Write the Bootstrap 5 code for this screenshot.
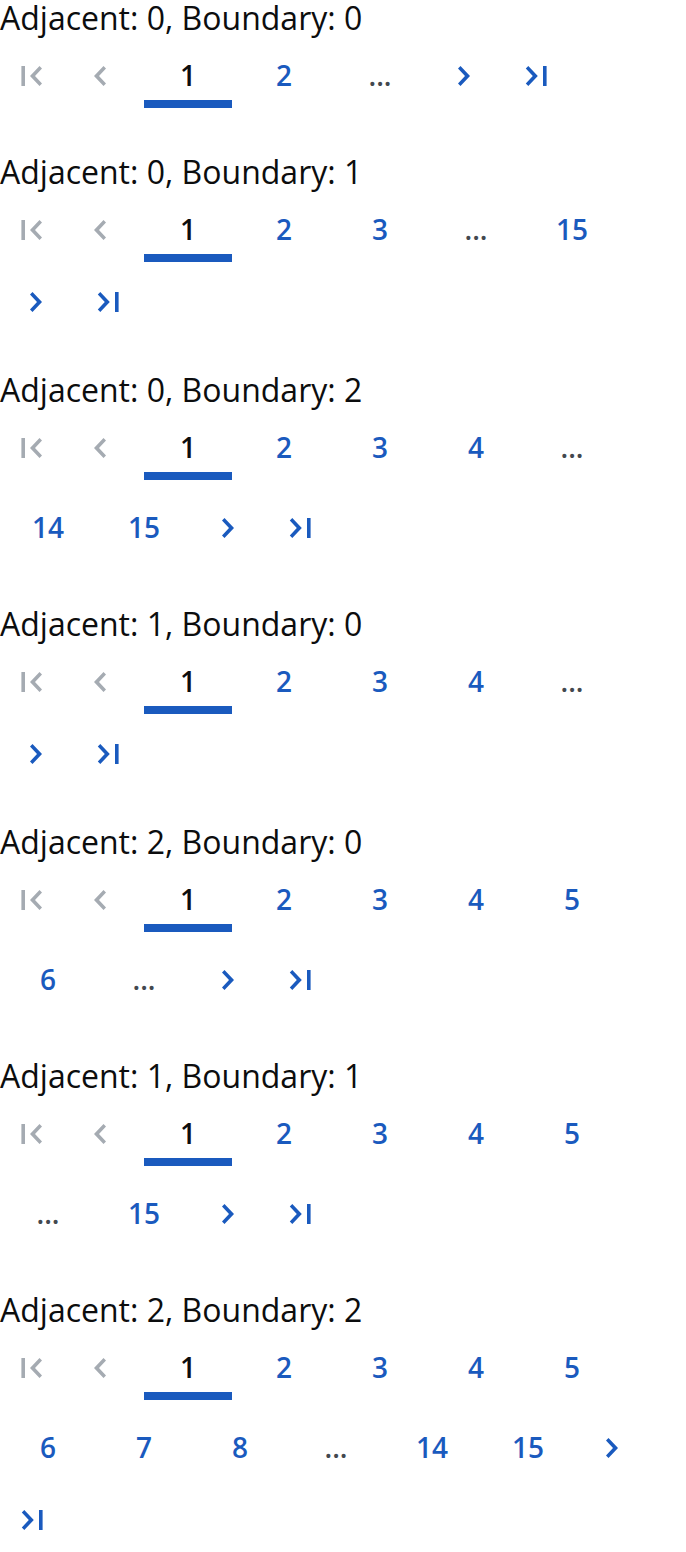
<!DOCTYPE html>
<html lang="en">
<head>
<meta charset="utf-8">
<meta name="viewport" content="width=device-width, initial-scale=1">
<title>Pagination: adjacent and boundary pages</title>
<link href="https://cdn.jsdelivr.net/npm/bootstrap@5.3.0/dist/css/bootstrap.min.css" rel="stylesheet">
<style>
  :root { --accent: #1a5abe; --ink: #0c0d0e; --muted: #a5abb2; --dots: #43484f; }
  body { font-family: "Open Sans", "Noto Sans", sans-serif; color: var(--ink); background: #fff; }
  .demo-list { gap: 38px; }
  .demo-title { font-size: 32px; line-height: 36px; font-weight: 400; color: var(--ink); }
  .pager-arrow, .pager-page {
    height: 64px; padding: 0; border: 0; border-radius: 0;
    display: flex; align-items: center; justify-content: center;
    color: var(--accent);
  }
  .pager-arrow { width: 64px; }
  .pager-arrow svg { width: 24px; height: 24px; fill: currentColor; }
  .pager-arrow:disabled { color: var(--muted); opacity: 1; border: 0; }
  .pager-step { margin-left: 4px; margin-right: 8px; }
  .pager-page { width: 88px; margin: 8px 4px; padding-bottom: 2px; font-size: 28px; line-height: 36px; font-weight: 600; }
  .pager-page[aria-current] { color: var(--ink); box-shadow: inset 0 -8px var(--accent); }
  .pager-dots { color: var(--dots); }
</style>
</head>
<body>
<svg class="d-none" aria-hidden="true">
  <symbol id="i-first" viewBox="0 0 24 24"><path d="M1.4 2H5v20H1.4zM22 4.5 19.5 2 10 12l9.5 10L22 19.5 15 12z"/></symbol>
  <symbol id="i-prev" viewBox="0 0 24 24"><path d="M18 4.5 15.5 2 6 12l9.5 10 2.5-2.5L11 12z"/></symbol>
  <symbol id="i-next" viewBox="0 0 24 24"><path d="M6 4.5 8.5 2 18 12 8.5 22 6 19.5 13 12z"/></symbol>
  <symbol id="i-last" viewBox="0 0 24 24"><path d="M1.8 4.5 4.3 2 13.8 12 4.3 22 1.8 19.5 8.8 12zM19 2h3.6v20H19z"/></symbol>
</svg>
<main class="demo-list d-flex flex-column">

  <section>
    <h2 class="demo-title m-0">Adjacent: 0, Boundary: 0</h2>
    <nav class="d-flex flex-wrap align-items-center" aria-label="Adjacent 0, boundary 0">
      <button class="btn pager-arrow" aria-label="First page" disabled><svg><use href="#i-first"/></svg></button>
      <button class="btn pager-arrow pager-step" aria-label="Previous page" disabled><svg><use href="#i-prev"/></svg></button>
      <button class="btn pager-page" aria-current="page">1</button>
      <button class="btn pager-page">2</button>
      <span class="pager-page pager-dots">...</span>
      <button class="btn pager-arrow pager-step" aria-label="Next page"><svg><use href="#i-next"/></svg></button>
      <button class="btn pager-arrow" aria-label="Last page"><svg><use href="#i-last"/></svg></button>
    </nav>
  </section>

  <section>
    <h2 class="demo-title m-0">Adjacent: 0, Boundary: 1</h2>
    <nav class="d-flex flex-wrap align-items-center" aria-label="Adjacent 0, boundary 1">
      <button class="btn pager-arrow" aria-label="First page" disabled><svg><use href="#i-first"/></svg></button>
      <button class="btn pager-arrow pager-step" aria-label="Previous page" disabled><svg><use href="#i-prev"/></svg></button>
      <button class="btn pager-page" aria-current="page">1</button>
      <button class="btn pager-page">2</button>
      <button class="btn pager-page">3</button>
      <span class="pager-page pager-dots">...</span>
      <button class="btn pager-page">15</button>
      <button class="btn pager-arrow pager-step" aria-label="Next page"><svg><use href="#i-next"/></svg></button>
      <button class="btn pager-arrow" aria-label="Last page"><svg><use href="#i-last"/></svg></button>
    </nav>
  </section>

  <section>
    <h2 class="demo-title m-0">Adjacent: 0, Boundary: 2</h2>
    <nav class="d-flex flex-wrap align-items-center" aria-label="Adjacent 0, boundary 2">
      <button class="btn pager-arrow" aria-label="First page" disabled><svg><use href="#i-first"/></svg></button>
      <button class="btn pager-arrow pager-step" aria-label="Previous page" disabled><svg><use href="#i-prev"/></svg></button>
      <button class="btn pager-page" aria-current="page">1</button>
      <button class="btn pager-page">2</button>
      <button class="btn pager-page">3</button>
      <button class="btn pager-page">4</button>
      <span class="pager-page pager-dots">...</span>
      <button class="btn pager-page">14</button>
      <button class="btn pager-page">15</button>
      <button class="btn pager-arrow pager-step" aria-label="Next page"><svg><use href="#i-next"/></svg></button>
      <button class="btn pager-arrow" aria-label="Last page"><svg><use href="#i-last"/></svg></button>
    </nav>
  </section>

  <section>
    <h2 class="demo-title m-0">Adjacent: 1, Boundary: 0</h2>
    <nav class="d-flex flex-wrap align-items-center" aria-label="Adjacent 1, boundary 0">
      <button class="btn pager-arrow" aria-label="First page" disabled><svg><use href="#i-first"/></svg></button>
      <button class="btn pager-arrow pager-step" aria-label="Previous page" disabled><svg><use href="#i-prev"/></svg></button>
      <button class="btn pager-page" aria-current="page">1</button>
      <button class="btn pager-page">2</button>
      <button class="btn pager-page">3</button>
      <button class="btn pager-page">4</button>
      <span class="pager-page pager-dots">...</span>
      <button class="btn pager-arrow pager-step" aria-label="Next page"><svg><use href="#i-next"/></svg></button>
      <button class="btn pager-arrow" aria-label="Last page"><svg><use href="#i-last"/></svg></button>
    </nav>
  </section>

  <section>
    <h2 class="demo-title m-0">Adjacent: 2, Boundary: 0</h2>
    <nav class="d-flex flex-wrap align-items-center" aria-label="Adjacent 2, boundary 0">
      <button class="btn pager-arrow" aria-label="First page" disabled><svg><use href="#i-first"/></svg></button>
      <button class="btn pager-arrow pager-step" aria-label="Previous page" disabled><svg><use href="#i-prev"/></svg></button>
      <button class="btn pager-page" aria-current="page">1</button>
      <button class="btn pager-page">2</button>
      <button class="btn pager-page">3</button>
      <button class="btn pager-page">4</button>
      <button class="btn pager-page">5</button>
      <button class="btn pager-page">6</button>
      <span class="pager-page pager-dots">...</span>
      <button class="btn pager-arrow pager-step" aria-label="Next page"><svg><use href="#i-next"/></svg></button>
      <button class="btn pager-arrow" aria-label="Last page"><svg><use href="#i-last"/></svg></button>
    </nav>
  </section>

  <section>
    <h2 class="demo-title m-0">Adjacent: 1, Boundary: 1</h2>
    <nav class="d-flex flex-wrap align-items-center" aria-label="Adjacent 1, boundary 1">
      <button class="btn pager-arrow" aria-label="First page" disabled><svg><use href="#i-first"/></svg></button>
      <button class="btn pager-arrow pager-step" aria-label="Previous page" disabled><svg><use href="#i-prev"/></svg></button>
      <button class="btn pager-page" aria-current="page">1</button>
      <button class="btn pager-page">2</button>
      <button class="btn pager-page">3</button>
      <button class="btn pager-page">4</button>
      <button class="btn pager-page">5</button>
      <span class="pager-page pager-dots">...</span>
      <button class="btn pager-page">15</button>
      <button class="btn pager-arrow pager-step" aria-label="Next page"><svg><use href="#i-next"/></svg></button>
      <button class="btn pager-arrow" aria-label="Last page"><svg><use href="#i-last"/></svg></button>
    </nav>
  </section>

  <section>
    <h2 class="demo-title m-0">Adjacent: 2, Boundary: 2</h2>
    <nav class="d-flex flex-wrap align-items-center" aria-label="Adjacent 2, boundary 2">
      <button class="btn pager-arrow" aria-label="First page" disabled><svg><use href="#i-first"/></svg></button>
      <button class="btn pager-arrow pager-step" aria-label="Previous page" disabled><svg><use href="#i-prev"/></svg></button>
      <button class="btn pager-page" aria-current="page">1</button>
      <button class="btn pager-page">2</button>
      <button class="btn pager-page">3</button>
      <button class="btn pager-page">4</button>
      <button class="btn pager-page">5</button>
      <button class="btn pager-page">6</button>
      <button class="btn pager-page">7</button>
      <button class="btn pager-page">8</button>
      <span class="pager-page pager-dots">...</span>
      <button class="btn pager-page">14</button>
      <button class="btn pager-page">15</button>
      <button class="btn pager-arrow pager-step" aria-label="Next page"><svg><use href="#i-next"/></svg></button>
      <button class="btn pager-arrow" aria-label="Last page"><svg><use href="#i-last"/></svg></button>
    </nav>
  </section>

</main>
<script src="https://cdn.jsdelivr.net/npm/bootstrap@5.3.0/dist/js/bootstrap.bundle.min.js"></script>
</body>
</html>
